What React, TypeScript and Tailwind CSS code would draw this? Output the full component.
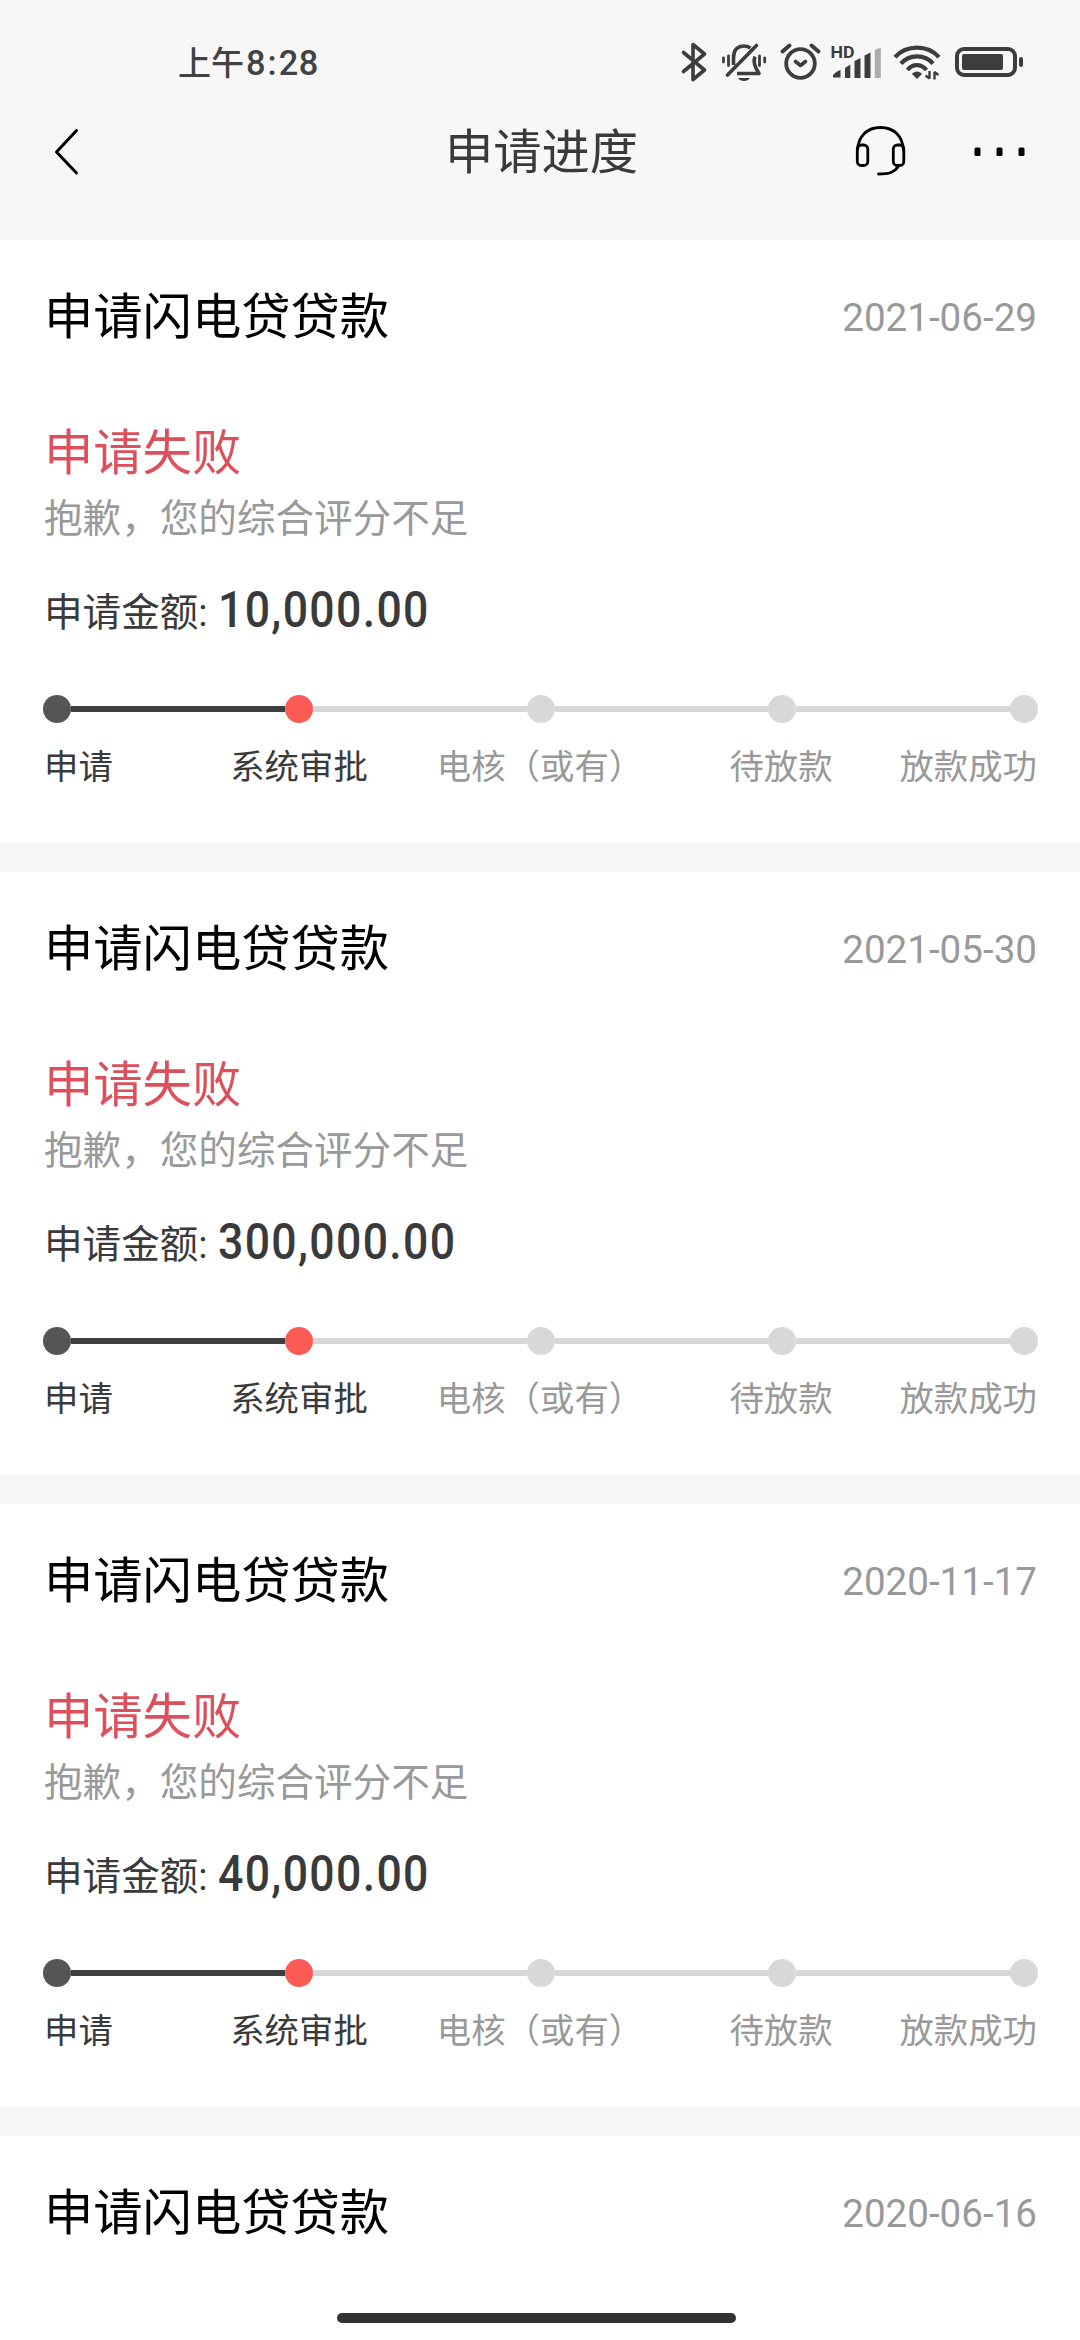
const records = [
  { date: "2021-06-29", amount: "10,000.00" },
  { date: "2021-05-30", amount: "300,000.00" },
  { date: "2020-11-17", amount: "40,000.00" },
  { date: "2020-06-16" },
];

function StatusIcons() {
  return (
    <svg width="344" height="50" viewBox="680 36 344 50" fill="none" stroke="#3d3d3d" strokeWidth="3.6" strokeLinecap="round" strokeLinejoin="round">
      {/* bluetooth */}
      <path d="M683.5 52.5 L704.5 70 L693 79.5 V44.5 L704.5 54 L683.5 71.5" />
      {/* muted bell */}
      <path d="M733.5 65 V58 C733.5 49.5 738 46 744 46 C747 46 749 47 750.5 48" strokeLinecap="butt" />
      <path d="M756.5 45.5 L727.5 75" />
      <path d="M755 56.5 C753 61 754 66 759 73.5 H737" strokeLinecap="butt" />
      <path d="M738 78 H750 C748 82 740 82 738 78 Z" fill="#3d3d3d" stroke="none" />
      <path d="M723.5 58 V62 M728.5 56 V65.5 M759.5 56 V65.5 M764.7 58 V62" strokeWidth="2.8" />
      {/* alarm clock */}
      <circle cx="800.5" cy="63.5" r="14.3" strokeWidth="3.8" />
      <path d="M795.5 61.5 L800.5 65.5 L805.5 61.5" />
      <path d="M782.5 51.5 L789.5 45.5 M811.5 45.5 L818.5 51.5" strokeWidth="4" />
      {/* signal */}
      <g stroke="none" fill="#3d3d3d">
        <text x="830.5" y="57.5" fontFamily="Roboto, sans-serif" fontWeight="700" fontSize="15.8" textLength="24" lengthAdjust="spacingAndGlyphs">HD</text>
        <path d="M833 77.5 V75 L837 71.5 L840.5 70 V77.5 Z" />
        <path d="M845 78 V68 L850.3 64.5 V78 Z" />
        <path d="M854.5 78 V61 L860.5 58 V78 Z" />
        <path d="M864.5 78 V55.5 L870.5 52.5 V78 Z" />
        <path d="M874.8 78 V50 L880.8 47.5 V78 Z" fill="#adadad" />
      </g>
      {/* wifi */}
      <g strokeLinecap="butt" strokeWidth="4.2">
        <path d="M895 57.2 C906.5 44.5 927.5 44.5 939 57.2" />
        <path d="M901 63.7 C909 54 925 54 933 63.7" />
        <path d="M907.5 70 C912.5 63.5 921 63.5 926.5 70" />
        <path d="M912 74 C914 70.5 920 70.5 922 74 L917 79 Z" fill="#3d3d3d" stroke="none" />
        <path d="M925.5 75.5 L929.5 78.5 V71 M938.5 75 L934.5 72 V79.5" strokeWidth="2.4" strokeLinejoin="bevel" />
      </g>
      {/* battery */}
      <rect x="957" y="49" width="58" height="26" rx="7" strokeWidth="4" />
      <rect x="962" y="54" width="41" height="16" rx="2" fill="#3d3d3d" stroke="none" />
      <rect x="1019" y="57" width="4" height="10" rx="2" fill="#3d3d3d" stroke="none" />
    </svg>
  );
}

function Header() {
  return (
    <header className="h-60 bg-[#f7f7f7]">
      <div className="flex h-[104px] items-start justify-between pl-[178px] pr-14 pt-9">
        <div className="mt-px flex items-baseline text-[34.4px] leading-[52px] font-medium whitespace-nowrap text-[#424242]">
          <span className="text-[33px]">上午</span>
          <span className="ml-0.5 tracking-[0.5px]">
            8<span className="mx-[1.5px]">:</span>28
          </span>
        </div>
        <StatusIcons />
      </div>
      <div className="grid h-24 grid-cols-3 items-center px-[52px]">
        <svg width="28" height="48" viewBox="52 128 28 48" fill="none" stroke="#000" strokeWidth="3" strokeLinecap="round" strokeLinejoin="round">
          <path d="M76.5 130.5 L56.5 152 L76.5 173" />
        </svg>
        <h1 className="pt-[3px] pl-[3px] text-center text-[48.3px] font-normal text-[#3a3a3a]">申请进度</h1>
        <svg className="justify-self-end" width="176" height="56" viewBox="852 124 176 56" fill="none" stroke="#000" strokeWidth="2.8" strokeLinecap="round">
          <path d="M857.5 150 C858.5 136 867 127.5 880.5 127.5 C894 127.5 902.5 136 903.5 150" />
          <rect x="857.3" y="145" width="10.5" height="20.5" rx="4" />
          <rect x="893.3" y="145" width="10.5" height="20.5" rx="4" />
          <path d="M898.5 166 C894.5 172.5 889 174 878.5 174" />
          <g fill="#000" stroke="none">
            <rect x="974.5" y="147.5" width="6" height="8.5" rx="1.5" />
            <rect x="996.5" y="147.5" width="6" height="8.5" rx="1.5" />
            <rect x="1018.5" y="147.5" width="6" height="8.5" rx="1.5" />
          </g>
        </svg>
      </div>
    </header>
  );
}

function Dot({ color }: { color: string }) {
  return <span className={`size-7 shrink-0 rounded-full ${color}`} />;
}

function Progress() {
  return (
    <>
      <div className="mt-[50px] -ml-0.5 flex h-7 w-[995px] items-center">
        <Dot color="bg-[#555555]" />
        <span className="h-1.5 flex-1 bg-[#3f3f3f]" />
        <Dot color="bg-[#fb5a55]" />
        <span className="h-1.5 flex-1 bg-[#d8d8d8]" />
        <Dot color="bg-[#d8d8d8]" />
        <span className="h-1.5 flex-1 bg-[#d8d8d8]" />
        <Dot color="bg-[#d8d8d8]" />
        <span className="h-1.5 flex-1 bg-[#d8d8d8]" />
        <Dot color="bg-[#d8d8d8]" />
      </div>
      <div className="mt-[18px] -ml-px grid grid-cols-[134px_242px_240px_242px_135px] text-[34.4px] leading-[52px] whitespace-nowrap text-[#999999]">
        <span className="text-[#3a3a3a]">申请</span>
        <span className="text-center text-[#3a3a3a]">系统审批</span>
        <span className="text-center">电核（或有）</span>
        <span className="text-center">待放款</span>
        <span className="justify-self-end">放款成功</span>
      </div>
    </>
  );
}

function Card({ date, amount }: { date: string; amount?: string }) {
  return (
    <article className="h-[603px] shrink-0 bg-white pt-[42px] pr-[43px] pl-[45px]">
      <div className="-ml-px flex h-[72px] items-center justify-between">
        <h2 className="text-[49.3px] font-normal text-black">申请闪电贷贷款</h2>
        <time className="text-[38.6px] text-[#999999]">{date}</time>
      </div>
      {amount && (
        <>
          <p className="mt-[63px] -ml-px text-[49.3px] leading-[72px] text-[#db505a]">申请失败</p>
          <p className="-ml-px text-[38.6px] leading-[60px] text-[#999999]">抱歉，您的综合评分不足</p>
          <div className="mt-[32px] -ml-px flex h-[64px] items-center text-[#3a3a3a]">
            <span className="text-[38.6px]">申请金额:</span>
            <span className="mb-1.5 ml-2.5 origin-left scale-x-90 text-[49.5px] font-[550] tracking-[1.5px]">{amount}</span>
          </div>
          <Progress />
        </>
      )}
    </article>
  );
}

export default function App() {
  return (
    <div className="relative h-[2340px] w-[1080px] overflow-hidden bg-[#f7f7f7] font-[Roboto,'Noto_Sans_CJK_SC',sans-serif]">
      <Header />
      <main className="flex flex-col gap-[29px]">
        {records.map((r) => (
          <Card key={r.date} date={r.date} amount={r.amount} />
        ))}
      </main>
      <div className="absolute bottom-0 left-0 flex h-10 w-full justify-center bg-white pt-[13px] pr-2">
        <div className="h-2.5 w-[399px] rounded-full bg-[#333333]" />
      </div>
    </div>
  );
}
